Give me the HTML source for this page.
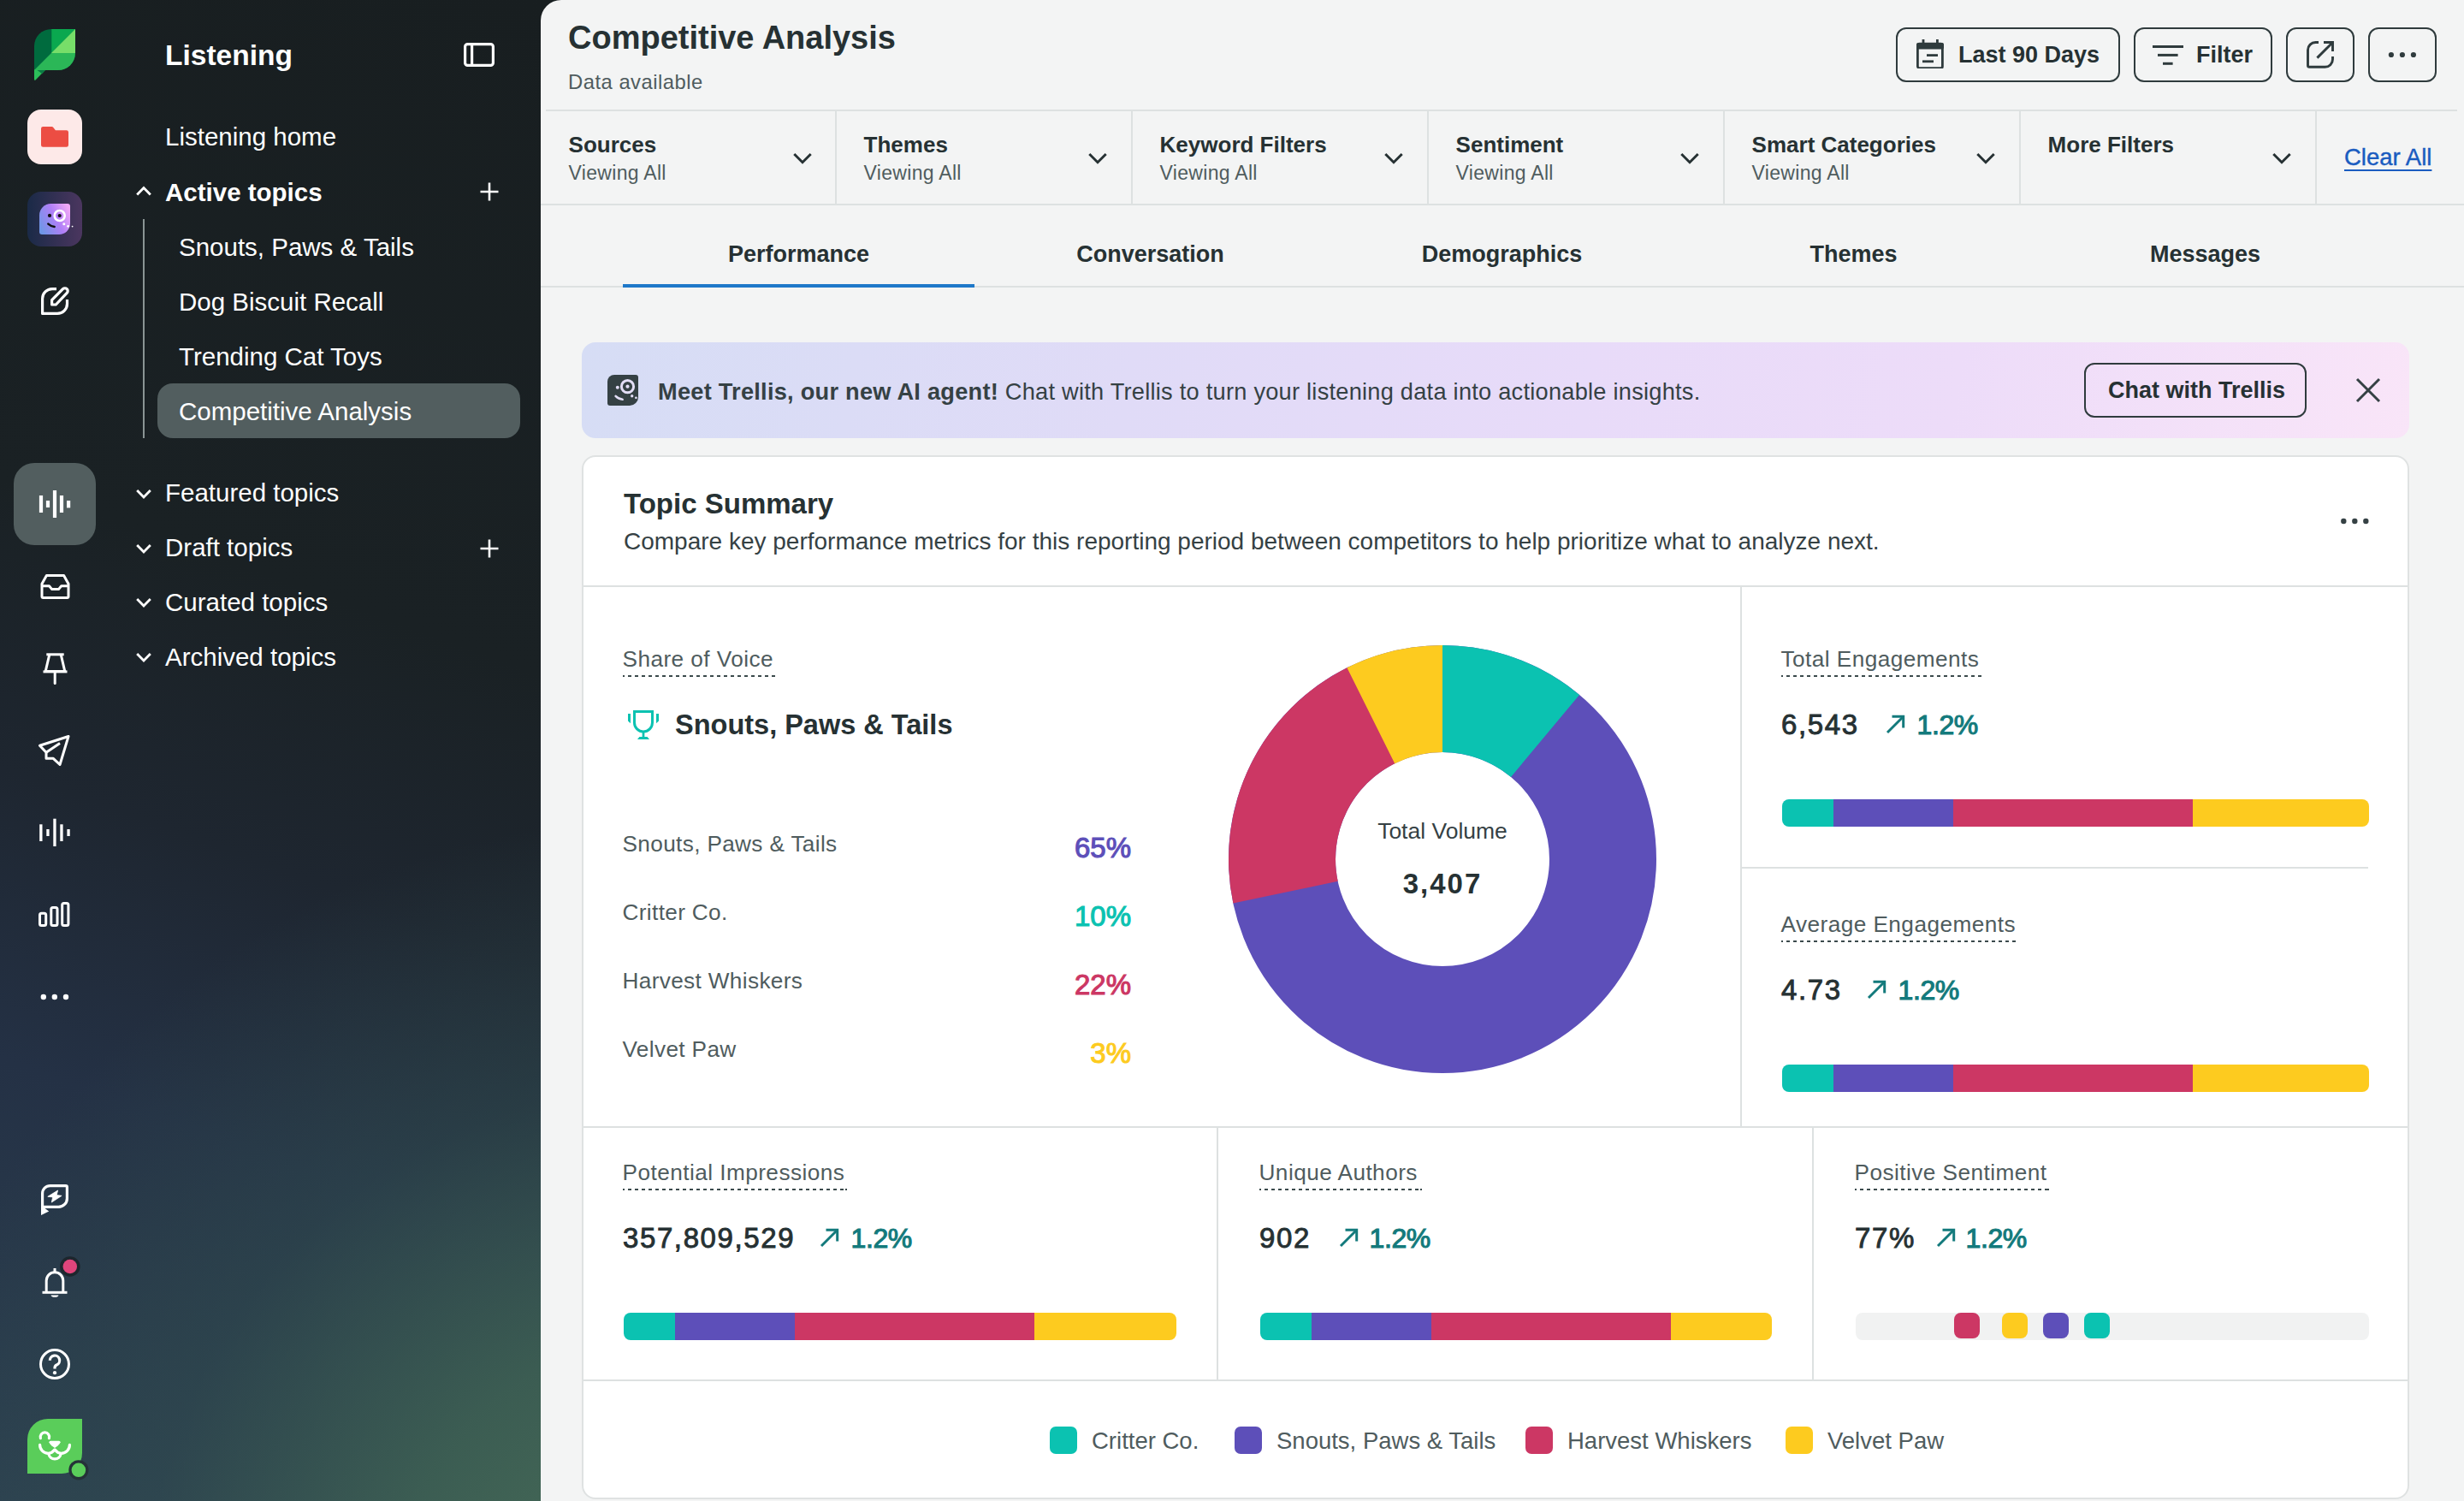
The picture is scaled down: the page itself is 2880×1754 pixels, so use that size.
<!DOCTYPE html>
<html><head><meta charset="utf-8"><title>Competitive Analysis</title><style>
html,body{margin:0;padding:0;width:2880px;height:1754px;overflow:hidden;background:#f3f4f4;}
body{position:relative;font-family:"Liberation Sans",sans-serif;}
.a{position:absolute;display:block;}
.t{position:absolute;white-space:nowrap;}
b{font-weight:700;}
</style></head><body>
<div class="a" style="left:0;top:0;width:660px;height:1754px;background:radial-gradient(circle 1050px at 780px 1880px, rgba(72,110,88,1) 0%, rgba(63,99,84,0.85) 30%, rgba(50,80,80,0.45) 58%, rgba(40,62,72,0) 88%),linear-gradient(200deg,#181e20 0%,#1a2124 40%,#1e2630 57%,#243145 74%,#2c4050 100%);"></div>
<svg class="a" style="left:40px;top:34px;" width="48" height="61" viewBox="0 0 48 61" ><defs><clipPath id="lc"><path d="M20,0 H48 V28 A20,20 0 0 1 28,48 H0 V20 A20,20 0 0 1 20,0 Z"/></clipPath></defs><g clip-path="url(#lc)"><rect x="0" y="0" width="48" height="48" fill="#006b3e"/><polygon points="20.3,0 48,0 20.3,27.7" fill="#0aa84f"/><polygon points="0,48 48,0 48,60 0,60" fill="#2bb757"/><polygon points="48,0 48,28 20,28" fill="#77de69"/></g><path d="M0,47.5 L0,58.3 Q0,61 2,59 L12.8,48 Z" fill="#2cbf5a"/><polygon points="3.5,48 12.7,48 9.3,52.3" fill="#0b7a44"/></svg>
<div class="a" style="left:32px;top:128px;width:64px;height:64px;background:#fde9e8;border-radius:16px;"></div>
<svg class="a" style="left:48px;top:146px;" width="32" height="28" viewBox="0 0 32 28" ><path d="M0,4.3 Q0,2 2.3,2 H12.6 Q13.5,2 14.1,2.7 L16.9,6.3 H29.7 Q32,6.3 32,8.6 V23.4 Q32,25.7 29.7,25.7 H2.3 Q0,25.7 0,23.4 Z" fill="#ec4d43"/></svg>
<svg class="a" style="left:32px;top:224px;" width="64" height="64" viewBox="0 0 64 64" ><defs><linearGradient id="tg1" x1="0" y1="0" x2="1" y2="0"><stop offset="0" stop-color="#1a2a47"/><stop offset="1" stop-color="#4b365f"/></linearGradient><linearGradient id="tg2" x1="0" y1="0.75" x2="1" y2="0.25"><stop offset="0" stop-color="#6f96e6"/><stop offset="0.55" stop-color="#b07ff7"/><stop offset="1" stop-color="#f0a8f7"/></linearGradient></defs><rect x="0" y="0" width="64" height="64" rx="16" fill="url(#tg1)"/><path d="M27.5,14 H47 Q50,14 50,17 V37 A13,13 0 0 1 37,50 H17 Q14,50 14,47 V27.5 A13.5,13.5 0 0 1 27.5,14 Z" fill="url(#tg2)"/><circle cx="26" cy="27.9" r="2.1" fill="#111"/><circle cx="37.7" cy="28" r="6" fill="none" stroke="#fff" stroke-width="2.6"/><circle cx="37.7" cy="28" r="2.1" fill="#111"/><path d="M24.3,37.6 Q27.5,40.6 31.7,41" fill="none" stroke="#111" stroke-width="2.5" stroke-linecap="round"/><circle cx="42.8" cy="37.7" r="1.5" fill="#fff"/><circle cx="47.6" cy="40.3" r="1.4" fill="#fff"/><circle cx="52.6" cy="40.6" r="0.9" fill="#fff"/></svg>
<svg class="a" style="left:48px;top:334px;" width="34" height="36" viewBox="0 0 34 36" ><g fill="none" stroke="#fff" stroke-width="3.2" stroke-linejoin="round" stroke-linecap="butt"><path d="M18,3.6 H13 A11.4,11.4 0 0 0 1.6,15 V32.4 H19 A11.4,11.4 0 0 0 30.5,21 V16"/><path d="M12.6,22 V16.6 L25.5,3.7 A3.3,3.3 0 0 1 30.2,8.4 L17.3,22 Z"/></g></svg>
<div class="a" style="left:16px;top:541px;width:96px;height:96px;background:#525e5f;border-radius:24px;"></div>
<svg class="a" style="left:0px;top:0px;" width="120" height="1200" viewBox="0 0 120 1200" ><rect x="45.9" y="579" width="4.2" height="20" fill="#fff"/><rect x="53.9" y="585" width="4.2" height="8" fill="#fff"/><rect x="61.9" y="573" width="4.2" height="32" fill="#fff"/><rect x="69.9" y="579" width="4.2" height="20" fill="#fff"/><rect x="78" y="585" width="4.2" height="8.399999999999977" fill="#fff"/></svg>
<svg class="a" style="left:46.5px;top:671px;" width="35" height="29" viewBox="0 0 35 29" ><g fill="none" stroke="#fff" stroke-width="3" stroke-linejoin="round"><path d="M7.4,1.5 H27.6 L33,11.2 V26 Q33,27.5 31.5,27.5 H3.5 Q2,27.5 2,26 V11.2 Z"/><path d="M2,13.8 H10.5 L13.7,17.6 H21.5 L24.7,13.8 H33"/></g></svg>
<svg class="a" style="left:49.5px;top:763px;" width="29" height="38" viewBox="0 0 29 38" ><g fill="none" stroke="#fff" stroke-width="3" stroke-linejoin="miter"><path d="M4.3,1.8 H24.7"/><path d="M7.8,1.8 L3.2,21.5 H25.8 L21.2,1.8"/><path d="M0.5,21.9 H28.5"/><path d="M14.2,22 V35.5" stroke-linecap="round"/></g></svg>
<svg class="a" style="left:44.8px;top:859px;" width="37" height="37" viewBox="0 0 37 37" ><g fill="none" stroke="#fff" stroke-width="3" stroke-linejoin="round"><path d="M1.5,12.3 L35,1.5 L25,34.5 L17.3,27.3 L9,27.3 L9,20.2 Z"/><path d="M9,20.2 L25,9.5"/></g></svg>
<svg class="a" style="left:0px;top:0px;" width="120" height="1200" viewBox="0 0 120 1200" ><rect x="46.2" y="963.3" width="3.3" height="19.700000000000045" fill="#fff"/><rect x="54.3" y="969" width="3.3" height="8" fill="#fff"/><rect x="62.3" y="956.7" width="3.3" height="32.299999999999955" fill="#fff"/><rect x="70.3" y="963.3" width="3.3" height="19.700000000000045" fill="#fff"/><rect x="78.4" y="969" width="3.3" height="8" fill="#fff"/></svg>
<svg class="a" style="left:44.5px;top:1054px;" width="37" height="30" viewBox="0 0 37 30" ><g fill="none" stroke="#fff" stroke-width="3"><rect x="1.5" y="13.2" width="7.2" height="14.3" rx="2"/><rect x="14.8" y="6.5" width="7.2" height="21" rx="2"/><rect x="27.7" y="1.5" width="7.2" height="26" rx="2"/></g></svg>
<svg class="a" style="left:44px;top:1158px;" width="40" height="14" viewBox="0 0 40 14" ><circle cx="6.8" cy="7" r="3.2" fill="#fff"/><circle cx="19.8" cy="7" r="3.2" fill="#fff"/><circle cx="33" cy="7" r="3.2" fill="#fff"/></svg>
<svg class="a" style="left:48px;top:1384px;" width="33" height="37" viewBox="0 0 33 37" ><g fill="none" stroke="#fff" stroke-width="3.2" stroke-linejoin="round"><path d="M1.6,27 V10.6 A9,9 0 0 1 10.6,1.6 H28.8 Q30.4,1.6 30.4,3.2 V16.4 A10,10 0 0 1 20.4,26.4 H1.6"/></g><polygon points="0,25 0,36 9.2,31.5 4.5,28 3.2,28 3.2,25" fill="#fff"/><path d="M19.6,7 L7.8,14.3 L13.7,14.9 L12.3,21 L24.1,13.3 L18.2,12.6 Z" fill="#fff" stroke="#fff" stroke-width="0.8" stroke-linejoin="round"/></svg>
<svg class="a" style="left:48px;top:1479px;" width="32" height="38" viewBox="0 0 32 38" ><g fill="none" stroke="#fff" stroke-width="3" stroke-linejoin="round"><path d="M6.2,31.5 V17.5 A9.8,9.8 0 0 1 25.8,17.5 V31.5"/><path d="M1.5,31.3 H30.5"/></g><rect x="14.5" y="3" width="3" height="4.5" fill="#fff"/><path d="M11.5,34.5 H20.5 Q20,36.8 16,36.8 Q12,36.8 11.5,34.5 Z" fill="#fff"/></svg>
<svg class="a" style="left:62px;top:1460px;" width="40" height="40" viewBox="0 0 40 40" ><circle cx="19.8" cy="20" r="11.8" fill="#1d262d"/><circle cx="19.8" cy="20" r="8.3" fill="#e0457b"/></svg>
<svg class="a" style="left:46px;top:1576px;" width="36" height="36" viewBox="0 0 36 36" ><circle cx="18" cy="18" r="16.5" fill="none" stroke="#fff" stroke-width="3"/><path d="M12.3,13.8 A5.7,5.7 0 1 1 20.2,19 Q18,20 18,22.5 V23.5" fill="none" stroke="#fff" stroke-width="3.2" stroke-linecap="butt"/><circle cx="18" cy="28.2" r="2.1" fill="#fff"/></svg>
<svg class="a" style="left:32px;top:1658px;" width="64" height="64" viewBox="0 0 64 64" ><path d="M24,0 H64 V40 A24,24 0 0 1 40,64 H0 V24 A24,24 0 0 1 24,0 Z" fill="#5acd5a"/><g fill="none" stroke="#fff" stroke-width="3.2" stroke-linecap="round"><path d="M15.4,22.6 A5.2,5.2 0 1 1 25.4,22.6"/><path d="M14.6,30.3 A9.8,9.8 0 0 0 24.4,40.3 Q28.8,40 31.6,36.2"/><path d="M49.4,30.3 A9.8,9.8 0 0 1 39.6,40.3 Q35.2,40 32.4,36.2"/><path d="M24.8,40.8 A7.3,7.3 0 0 0 39.2,40.8"/></g><path d="M25.4,27.3 Q25.4,25.8 27,25.8 H37 Q38.6,25.8 38.6,27.3 Q38.2,29.5 35.5,31.5 L32,34 L28.5,31.5 Q25.8,29.5 25.4,27.3 Z" fill="#fff"/></svg>
<svg class="a" style="left:72px;top:1698px;" width="40" height="40" viewBox="0 0 40 40" ><circle cx="19.9" cy="19.8" r="11.6" fill="#253238"/><circle cx="19.9" cy="19.8" r="8.3" fill="#5acd5a"/></svg>
<div class="t " style="left:193.0px;top:47.84px;font-size:33.5px;line-height:33.5px;font-weight:700;color:#ffffff;">Listening</div>
<svg class="a" style="left:542px;top:50px;" width="36" height="28" viewBox="0 0 36 28" ><rect x="1.6" y="1.6" width="32.8" height="24.8" rx="3" fill="none" stroke="#fff" stroke-width="3.2"/><rect x="8" y="1.6" width="3.2" height="24.8" fill="#fff"/></svg>
<div class="t " style="left:193.0px;top:145.13px;font-size:29.5px;line-height:29.5px;font-weight:400;color:#ffffff;">Listening home</div>
<svg class="a" style="left:159px;top:217px;" width="18" height="13" viewBox="0 0 18 13" ><path d="M1.2,10.6 L9,2.6 L16.8,10.6" fill="none" stroke="#fff" stroke-width="2.8"/></svg>
<div class="t " style="left:193.0px;top:209.63px;font-size:29.5px;line-height:29.5px;font-weight:700;color:#ffffff;">Active topics</div>
<svg class="a" style="left:561px;top:213px;" width="22" height="22" viewBox="0 0 22 22" ><path d="M11,0.5 V21.5 M0.5,11 H21.5" stroke="#fff" stroke-width="2.6"/></svg>
<div class="a" style="left:167px;top:256px;width:2px;height:256px;background:#8a9494;"></div>
<div class="a" style="left:184px;top:448px;width:424px;height:64px;background:#525e5f;border-radius:18px;"></div>
<div class="t " style="left:209.0px;top:273.63px;font-size:29.5px;line-height:29.5px;font-weight:400;color:#ffffff;">Snouts, Paws &amp; Tails</div>
<div class="t " style="left:209.0px;top:337.63px;font-size:29.5px;line-height:29.5px;font-weight:400;color:#ffffff;">Dog Biscuit Recall</div>
<div class="t " style="left:209.0px;top:401.63px;font-size:29.5px;line-height:29.5px;font-weight:400;color:#ffffff;">Trending Cat Toys</div>
<div class="t " style="left:209.0px;top:465.63px;font-size:29.5px;line-height:29.5px;font-weight:400;color:#ffffff;">Competitive Analysis</div>
<svg class="a" style="left:159px;top:570.6999999999999px;" width="18" height="13" viewBox="0 0 18 13" ><path d="M1.2,2 L9,10 L16.8,2" fill="none" stroke="#fff" stroke-width="2.8"/></svg>
<div class="t " style="left:193.0px;top:561.33px;font-size:29.5px;line-height:29.5px;font-weight:400;color:#ffffff;">Featured topics</div>
<svg class="a" style="left:159px;top:634.4999999999999px;" width="18" height="13" viewBox="0 0 18 13" ><path d="M1.2,2 L9,10 L16.8,2" fill="none" stroke="#fff" stroke-width="2.8"/></svg>
<div class="t " style="left:193.0px;top:625.13px;font-size:29.5px;line-height:29.5px;font-weight:400;color:#ffffff;">Draft topics</div>
<svg class="a" style="left:159px;top:698.3px;" width="18" height="13" viewBox="0 0 18 13" ><path d="M1.2,2 L9,10 L16.8,2" fill="none" stroke="#fff" stroke-width="2.8"/></svg>
<div class="t " style="left:193.0px;top:688.93px;font-size:29.5px;line-height:29.5px;font-weight:400;color:#ffffff;">Curated topics</div>
<svg class="a" style="left:159px;top:762.0999999999999px;" width="18" height="13" viewBox="0 0 18 13" ><path d="M1.2,2 L9,10 L16.8,2" fill="none" stroke="#fff" stroke-width="2.8"/></svg>
<div class="t " style="left:193.0px;top:752.73px;font-size:29.5px;line-height:29.5px;font-weight:400;color:#ffffff;">Archived topics</div>
<svg class="a" style="left:561px;top:629.5px;" width="22" height="22" viewBox="0 0 22 22" ><path d="M11,0.5 V21.5 M0.5,11 H21.5" stroke="#fff" stroke-width="2.6"/></svg>
<div class="a" style="left:632px;top:0px;width:2248px;height:1754px;background:#f3f4f4;border-top-left-radius:24px;"></div>
<div class="t " style="left:664.0px;top:24.93px;font-size:38px;line-height:38px;font-weight:700;color:#263133;">Competitive Analysis</div>
<div class="t " style="left:664.0px;top:84.45px;font-size:23.8px;line-height:23.8px;font-weight:400;color:#4f5c5e;letter-spacing:0.5px;">Data available</div>
<div class="a" style="left:2216px;top:32px;width:262px;height:64px;background:transparent;border:2px solid #2f3b3d;border-radius:12px;box-sizing:border-box;"></div>
<svg class="a" style="left:2240px;top:46px;" width="32" height="34" viewBox="0 0 32 34" ><g fill="none" stroke="#2f3b3d" stroke-width="2.8"><rect x="1.4" y="5.2" width="29" height="28.4" rx="2"/></g><rect x="0" y="4" width="32" height="7.6" rx="2" fill="#2f3b3d"/><rect x="6.6" y="0" width="2.8" height="5" fill="#2f3b3d"/><rect x="23" y="0" width="2.8" height="5" fill="#2f3b3d"/><rect x="12" y="17.2" width="13" height="2.8" fill="#2f3b3d"/><rect x="7" y="24.4" width="13" height="2.8" fill="#2f3b3d"/></svg>
<div class="t " style="left:2289.0px;top:51.14px;font-size:27px;line-height:27px;font-weight:700;color:#263133;">Last 90 Days</div>
<div class="a" style="left:2494px;top:32px;width:162px;height:64px;background:transparent;border:2px solid #2f3b3d;border-radius:12px;box-sizing:border-box;"></div>
<svg class="a" style="left:2516px;top:52.5px;" width="36" height="23" viewBox="0 0 36 23" ><rect x="0" y="0" width="36" height="3" fill="#2f3b3d"/><rect x="6" y="9.9" width="23.6" height="3" fill="#2f3b3d"/><rect x="12" y="19.8" width="11.6" height="3" fill="#2f3b3d"/></svg>
<div class="t " style="left:2567.0px;top:51.14px;font-size:27px;line-height:27px;font-weight:700;color:#263133;">Filter</div>
<div class="a" style="left:2672px;top:32px;width:80px;height:64px;background:transparent;border:2px solid #2f3b3d;border-radius:12px;box-sizing:border-box;"></div>
<svg class="a" style="left:2696px;top:48px;" width="32" height="32" viewBox="0 0 32 32" ><g fill="none" stroke="#2f3b3d" stroke-width="2.9"><path d="M14,1.5 H10.5 A9,9 0 0 0 1.5,10.5 V28.5 Q1.5,30.3 3.3,30.3 H21.5 A9,9 0 0 0 30.5,21.3 V18"/><path d="M20,1.5 H30.5 V12"/><path d="M30.3,1.7 L12.4,19.6"/></g></svg>
<div class="a" style="left:2768px;top:32px;width:80px;height:64px;background:transparent;border:2px solid #2f3b3d;border-radius:12px;box-sizing:border-box;"></div>
<svg class="a" style="left:2788px;top:58px;" width="40" height="12" viewBox="0 0 40 12" ><circle cx="6.9" cy="6" r="3.1" fill="#2f3b3d"/><circle cx="19.9" cy="6" r="3.1" fill="#2f3b3d"/><circle cx="32.9" cy="6" r="3.1" fill="#2f3b3d"/></svg>
<div class="a" style="left:638px;top:128px;width:2234px;height:2px;background:#dde1e1;"></div>
<div class="a" style="left:632px;top:238px;width:2248px;height:2px;background:#dde1e1;"></div>
<div class="t " style="left:664.6px;top:155.89px;font-size:26px;line-height:26px;font-weight:700;color:#263133;">Sources</div>
<div class="t " style="left:664.6px;top:191.23px;font-size:23px;line-height:23px;font-weight:400;color:#4f5c5e;letter-spacing:0.3px;">Viewing All</div>
<svg class="a" style="left:927px;top:177.5px;" width="22" height="14" viewBox="0 0 22 14" ><path d="M1.3,2 L11,11.7 L20.7,2" fill="none" stroke="#263133" stroke-width="3"/></svg>
<div class="a" style="left:976px;top:130px;width:2px;height:108px;background:#dde1e1;"></div>
<div class="t " style="left:1009.6px;top:155.89px;font-size:26px;line-height:26px;font-weight:700;color:#263133;">Themes</div>
<div class="t " style="left:1009.6px;top:191.23px;font-size:23px;line-height:23px;font-weight:400;color:#4f5c5e;letter-spacing:0.3px;">Viewing All</div>
<svg class="a" style="left:1272px;top:177.5px;" width="22" height="14" viewBox="0 0 22 14" ><path d="M1.3,2 L11,11.7 L20.7,2" fill="none" stroke="#263133" stroke-width="3"/></svg>
<div class="a" style="left:1322px;top:130px;width:2px;height:108px;background:#dde1e1;"></div>
<div class="t " style="left:1355.6px;top:155.89px;font-size:26px;line-height:26px;font-weight:700;color:#263133;">Keyword Filters</div>
<div class="t " style="left:1355.6px;top:191.23px;font-size:23px;line-height:23px;font-weight:400;color:#4f5c5e;letter-spacing:0.3px;">Viewing All</div>
<svg class="a" style="left:1618px;top:177.5px;" width="22" height="14" viewBox="0 0 22 14" ><path d="M1.3,2 L11,11.7 L20.7,2" fill="none" stroke="#263133" stroke-width="3"/></svg>
<div class="a" style="left:1668px;top:130px;width:2px;height:108px;background:#dde1e1;"></div>
<div class="t " style="left:1701.6px;top:155.89px;font-size:26px;line-height:26px;font-weight:700;color:#263133;">Sentiment</div>
<div class="t " style="left:1701.6px;top:191.23px;font-size:23px;line-height:23px;font-weight:400;color:#4f5c5e;letter-spacing:0.3px;">Viewing All</div>
<svg class="a" style="left:1964px;top:177.5px;" width="22" height="14" viewBox="0 0 22 14" ><path d="M1.3,2 L11,11.7 L20.7,2" fill="none" stroke="#263133" stroke-width="3"/></svg>
<div class="a" style="left:2014px;top:130px;width:2px;height:108px;background:#dde1e1;"></div>
<div class="t " style="left:2047.6px;top:155.89px;font-size:26px;line-height:26px;font-weight:700;color:#263133;">Smart Categories</div>
<div class="t " style="left:2047.6px;top:191.23px;font-size:23px;line-height:23px;font-weight:400;color:#4f5c5e;letter-spacing:0.3px;">Viewing All</div>
<svg class="a" style="left:2310px;top:177.5px;" width="22" height="14" viewBox="0 0 22 14" ><path d="M1.3,2 L11,11.7 L20.7,2" fill="none" stroke="#263133" stroke-width="3"/></svg>
<div class="a" style="left:2360px;top:130px;width:2px;height:108px;background:#dde1e1;"></div>
<div class="t " style="left:2393.6px;top:155.89px;font-size:26px;line-height:26px;font-weight:700;color:#263133;">More Filters</div>
<svg class="a" style="left:2656px;top:177.5px;" width="22" height="14" viewBox="0 0 22 14" ><path d="M1.3,2 L11,11.7 L20.7,2" fill="none" stroke="#263133" stroke-width="3"/></svg>
<div class="a" style="left:2706px;top:130px;width:2px;height:108px;background:#dde1e1;"></div>
<div class="t " style="left:2740.0px;top:169.62px;font-size:27.5px;line-height:27.5px;font-weight:400;color:#1a5cc0;text-decoration:underline;text-decoration-thickness:2px;text-underline-offset:5px;-webkit-text-stroke:0.4px #1a5cc0;">Clear All</div>
<div class="a" style="left:632px;top:334px;width:2248px;height:2px;background:#dde1e1;"></div>
<div class="t" style="left:728.0px;width:411px;text-align:center;top:283.54px;font-size:27px;line-height:27px;font-weight:700;color:#263133;">Performance</div>
<div class="t" style="left:1139.0px;width:411px;text-align:center;top:283.54px;font-size:27px;line-height:27px;font-weight:700;color:#263133;">Conversation</div>
<div class="t" style="left:1550.0px;width:411px;text-align:center;top:283.54px;font-size:27px;line-height:27px;font-weight:700;color:#263133;">Demographics</div>
<div class="t" style="left:1961.0px;width:411px;text-align:center;top:283.54px;font-size:27px;line-height:27px;font-weight:700;color:#263133;">Themes</div>
<div class="t" style="left:2372.0px;width:411px;text-align:center;top:283.54px;font-size:27px;line-height:27px;font-weight:700;color:#263133;">Messages</div>
<div class="a" style="left:728px;top:332px;width:411px;height:4px;background:#1e78c9;"></div>
<div class="a" style="left:680px;top:400px;width:2136px;height:112px;border-radius:16px;background:linear-gradient(100deg,#d6ddf5 0%,#e0dbf7 30%,#e8dbf9 55%,#eddcf9 75%,#f9e5f8 100%);"></div>
<svg class="a" style="left:710px;top:438px;" width="36" height="36" viewBox="0 0 36 36" ><path d="M8,0 H33 Q36,0 36,3 V26 A10,10 0 0 1 26,36 H3 Q0,36 0,33 V8 A8,8 0 0 1 8,0 Z" fill="#354144"/><circle cx="11.8" cy="14.7" r="2" fill="#e3def6"/><circle cx="23.5" cy="13.7" r="7.1" fill="none" stroke="#e3def6" stroke-width="3"/><circle cx="23.5" cy="13.7" r="2.1" fill="#e3def6"/><path d="M9.6,24.9 Q13,28.3 17.6,28.8" fill="none" stroke="#e3def6" stroke-width="2.6" stroke-linecap="round"/><circle cx="28.7" cy="24.8" r="1.7" fill="#e3def6"/><circle cx="33.4" cy="26.8" r="1.4" fill="#e3def6"/></svg>
<div class="t " style="left:769.0px;top:443.58px;font-size:27.2px;line-height:27.2px;font-weight:400;color:#354144;letter-spacing:0.25px;"><b>Meet Trellis, our new AI agent!</b> Chat with Trellis to turn your listening data into actionable insights.</div>
<div class="a" style="left:2436px;top:424px;width:260px;height:64px;background:transparent;border:2px solid #2f3b3d;border-radius:12px;box-sizing:border-box;"></div>
<div class="t " style="left:2464.0px;top:443.44px;font-size:27px;line-height:27px;font-weight:700;color:#263133;">Chat with Trellis</div>
<svg class="a" style="left:2753px;top:441px;" width="30" height="30" viewBox="0 0 30 30" ><path d="M2,2 L28,28 M28,2 L2,28" stroke="#354144" stroke-width="3"/></svg>
<div class="a" style="left:680px;top:532px;width:2136px;height:1220px;background:#ffffff;border:2px solid #dfe2e2;border-radius:16px;box-sizing:border-box;"></div>
<div class="t " style="left:729.0px;top:572.37px;font-size:33px;line-height:33px;font-weight:700;color:#263133;">Topic Summary</div>
<div class="t " style="left:729.0px;top:618.70px;font-size:28px;line-height:28px;font-weight:400;color:#354144;">Compare key performance metrics for this reporting period between competitors to help prioritize what to analyze next.</div>
<svg class="a" style="left:2735px;top:602px;" width="40" height="14" viewBox="0 0 40 14" ><circle cx="4.3" cy="7" r="3.2" fill="#354144"/><circle cx="17.3" cy="7" r="3.2" fill="#354144"/><circle cx="30.3" cy="7" r="3.2" fill="#354144"/></svg>
<div class="a" style="left:682px;top:684px;width:2132px;height:2px;background:#dde1e1;"></div>
<div class="a" style="left:2034px;top:686px;width:2px;height:631px;background:#dde1e1;"></div>
<div class="a" style="left:2036px;top:1013px;width:732px;height:2px;background:#dde1e1;"></div>
<div class="a" style="left:682px;top:1316px;width:2132px;height:2px;background:#dde1e1;"></div>
<div class="a" style="left:1422px;top:1318px;width:2px;height:295px;background:#dde1e1;"></div>
<div class="a" style="left:2118px;top:1318px;width:2px;height:295px;background:#dde1e1;"></div>
<div class="a" style="left:682px;top:1612px;width:2132px;height:2px;background:#dde1e1;"></div>
<div class="t " style="left:727.5px;top:757.02px;font-size:26.2px;line-height:26.2px;font-weight:400;color:#4f5c5e;letter-spacing:0.45px;">Share of Voice</div>
<div class="a" style="left:728px;top:789px;width:178px;height:2px;background:repeating-linear-gradient(90deg,#3b4a4c 0 4px,transparent 4px 8px);background-position:-2px 0;"></div>
<svg class="a" style="left:733px;top:829px;" width="38" height="36" viewBox="0 0 38 36" ><g fill="none" stroke="#0bc2b1" stroke-width="3"><path d="M8.5,2.5 H29.5 V15.5 A10.5,10.5 0 0 1 8.5,15.5 Z"/></g><rect x="17.65" y="26.5" width="2.7" height="6" fill="#0bc2b1"/><polygon points="12,35 14.4,32 23.6,32 26,35" fill="#0bc2b1"/><polygon points="1,5 4,5 4,16.3 1,13.6" fill="#0bc2b1"/><polygon points="34,5 37,5 37,13.6 34,16.3" fill="#0bc2b1"/></svg>
<div class="t " style="left:789.0px;top:831.09px;font-size:32.5px;line-height:32.5px;font-weight:700;color:#263133;">Snouts, Paws &amp; Tails</div>
<div class="t " style="left:727.5px;top:973.22px;font-size:26.2px;line-height:26.2px;font-weight:400;color:#4f5c5e;letter-spacing:0.35px;">Snouts, Paws &amp; Tails</div>
<div class="t" style="left:722.0px;width:600px;text-align:right;top:973.67px;font-size:33px;line-height:33px;font-weight:400;color:#5d4fb9;-webkit-text-stroke:1.1px #5d4fb9;">65%</div>
<div class="t " style="left:727.5px;top:1053.22px;font-size:26.2px;line-height:26.2px;font-weight:400;color:#4f5c5e;letter-spacing:0.35px;">Critter Co.</div>
<div class="t" style="left:722.0px;width:600px;text-align:right;top:1053.67px;font-size:33px;line-height:33px;font-weight:400;color:#0bc2b1;-webkit-text-stroke:1.1px #0bc2b1;">10%</div>
<div class="t " style="left:727.5px;top:1133.22px;font-size:26.2px;line-height:26.2px;font-weight:400;color:#4f5c5e;letter-spacing:0.35px;">Harvest Whiskers</div>
<div class="t" style="left:722.0px;width:600px;text-align:right;top:1133.67px;font-size:33px;line-height:33px;font-weight:400;color:#cc3764;-webkit-text-stroke:1.1px #cc3764;">22%</div>
<div class="t " style="left:727.5px;top:1213.22px;font-size:26.2px;line-height:26.2px;font-weight:400;color:#4f5c5e;letter-spacing:0.35px;">Velvet Paw</div>
<div class="t" style="left:722.0px;width:600px;text-align:right;top:1213.67px;font-size:33px;line-height:33px;font-weight:400;color:#fdcb1f;-webkit-text-stroke:1.1px #fdcb1f;">3%</div>
<svg class="a" style="left:1400px;top:720px;" width="560" height="570" viewBox="0 0 560 570" ><circle cx="286" cy="284" r="187.5" fill="none" stroke="#5d4fb9" stroke-width="125"/><path d="M283.38,34.01 A250,250 0 0 1 446.03,91.93 L366.01,187.96 A125,125 0 0 0 284.69,159.01 Z" fill="#0bc2b1"/><path d="M41.37,335.55 A250,250 0 0 1 177.19,58.92 L231.60,171.46 A125,125 0 0 0 163.69,309.78 Z" fill="#cc3764"/><path d="M174.45,60.27 A250,250 0 0 1 286.00,34.00 L286.00,159.00 A125,125 0 0 0 230.23,172.13 Z" fill="#fdcb1f"/></svg>
<div class="t" style="left:1536.0px;width:300px;text-align:center;top:957.57px;font-size:26.5px;line-height:26.5px;font-weight:400;color:#354144;">Total Volume</div>
<div class="t" style="left:1536.0px;width:300px;text-align:center;top:1016.07px;font-size:33px;line-height:33px;font-weight:700;color:#263133;letter-spacing:2px;">3,407</div>
<div class="t " style="left:2081.5px;top:756.82px;font-size:26.2px;line-height:26.2px;font-weight:400;color:#4f5c5e;letter-spacing:0.45px;">Total Engagements</div>
<div class="a" style="left:2082px;top:789px;width:234px;height:2px;background:repeating-linear-gradient(90deg,#3b4a4c 0 4px,transparent 4px 8px);background-position:-2px 0;"></div>
<div class="t " style="left:2082.0px;top:830.07px;font-size:33px;line-height:33px;font-weight:400;color:#263133;letter-spacing:1.6px;-webkit-text-stroke:0.9px #263133;">6,543</div>
<svg class="a" style="left:2204px;top:835px;" width="23" height="23" viewBox="0 0 23 23" ><g fill="none" stroke="#137a7c" stroke-width="3"><path d="M2,21 L20.5,2.5"/><path d="M7.5,2.3 H20.7 V15.5"/></g></svg>
<div class="t " style="left:2240.5px;top:830.91px;font-size:32px;line-height:32px;font-weight:400;color:#137a7c;letter-spacing:-0.4px;-webkit-text-stroke:1.1px #137a7c;">1.2%</div>
<div class="a" style="left:2083px;top:934px;width:686px;height:32px;border-radius:8px;overflow:hidden;display:flex"><div style="width:60.00px;height:32px;background:#0bc2b1"></div><div style="width:140.00px;height:32px;background:#5d4fb9"></div><div style="width:280.00px;height:32px;background:#cc3764"></div><div style="width:206.00px;height:32px;background:#fdcb1f"></div></div>
<div class="t " style="left:2081.5px;top:1066.82px;font-size:26.2px;line-height:26.2px;font-weight:400;color:#4f5c5e;letter-spacing:0.45px;">Average Engagements</div>
<div class="a" style="left:2082px;top:1099px;width:274px;height:2px;background:repeating-linear-gradient(90deg,#3b4a4c 0 4px,transparent 4px 8px);background-position:-2px 0;"></div>
<div class="t " style="left:2082.0px;top:1140.07px;font-size:33px;line-height:33px;font-weight:400;color:#263133;letter-spacing:1.6px;-webkit-text-stroke:0.9px #263133;">4.73</div>
<svg class="a" style="left:2182px;top:1145px;" width="23" height="23" viewBox="0 0 23 23" ><g fill="none" stroke="#137a7c" stroke-width="3"><path d="M2,21 L20.5,2.5"/><path d="M7.5,2.3 H20.7 V15.5"/></g></svg>
<div class="t " style="left:2218.5px;top:1140.91px;font-size:32px;line-height:32px;font-weight:400;color:#137a7c;letter-spacing:-0.4px;-webkit-text-stroke:1.1px #137a7c;">1.2%</div>
<div class="a" style="left:2083px;top:1244px;width:686px;height:32px;border-radius:8px;overflow:hidden;display:flex"><div style="width:60.00px;height:32px;background:#0bc2b1"></div><div style="width:140.00px;height:32px;background:#5d4fb9"></div><div style="width:280.00px;height:32px;background:#cc3764"></div><div style="width:206.00px;height:32px;background:#fdcb1f"></div></div>
<div class="t " style="left:727.5px;top:1356.82px;font-size:26.2px;line-height:26.2px;font-weight:400;color:#4f5c5e;letter-spacing:0.45px;">Potential Impressions</div>
<div class="a" style="left:728px;top:1389px;width:262px;height:2px;background:repeating-linear-gradient(90deg,#3b4a4c 0 4px,transparent 4px 8px);background-position:-2px 0;"></div>
<div class="t " style="left:728.0px;top:1430.07px;font-size:33px;line-height:33px;font-weight:400;color:#263133;letter-spacing:1.6px;-webkit-text-stroke:0.9px #263133;">357,809,529</div>
<svg class="a" style="left:958px;top:1435px;" width="23" height="23" viewBox="0 0 23 23" ><g fill="none" stroke="#137a7c" stroke-width="3"><path d="M2,21 L20.5,2.5"/><path d="M7.5,2.3 H20.7 V15.5"/></g></svg>
<div class="t " style="left:994.5px;top:1430.91px;font-size:32px;line-height:32px;font-weight:400;color:#137a7c;letter-spacing:-0.4px;-webkit-text-stroke:1.1px #137a7c;">1.2%</div>
<div class="a" style="left:729px;top:1534px;width:646px;height:32px;border-radius:8px;overflow:hidden;display:flex"><div style="width:60.00px;height:32px;background:#0bc2b1"></div><div style="width:140.00px;height:32px;background:#5d4fb9"></div><div style="width:280.00px;height:32px;background:#cc3764"></div><div style="width:166.00px;height:32px;background:#fdcb1f"></div></div>
<div class="t " style="left:1471.5px;top:1356.82px;font-size:26.2px;line-height:26.2px;font-weight:400;color:#4f5c5e;letter-spacing:0.45px;">Unique Authors</div>
<div class="a" style="left:1472px;top:1389px;width:190px;height:2px;background:repeating-linear-gradient(90deg,#3b4a4c 0 4px,transparent 4px 8px);background-position:-2px 0;"></div>
<div class="t " style="left:1472.0px;top:1430.07px;font-size:33px;line-height:33px;font-weight:400;color:#263133;letter-spacing:1.6px;-webkit-text-stroke:0.9px #263133;">902</div>
<svg class="a" style="left:1565px;top:1435px;" width="23" height="23" viewBox="0 0 23 23" ><g fill="none" stroke="#137a7c" stroke-width="3"><path d="M2,21 L20.5,2.5"/><path d="M7.5,2.3 H20.7 V15.5"/></g></svg>
<div class="t " style="left:1600.5px;top:1430.91px;font-size:32px;line-height:32px;font-weight:400;color:#137a7c;letter-spacing:-0.4px;-webkit-text-stroke:1.1px #137a7c;">1.2%</div>
<div class="a" style="left:1473px;top:1534px;width:598px;height:32px;border-radius:8px;overflow:hidden;display:flex"><div style="width:60.00px;height:32px;background:#0bc2b1"></div><div style="width:140.00px;height:32px;background:#5d4fb9"></div><div style="width:280.00px;height:32px;background:#cc3764"></div><div style="width:118.00px;height:32px;background:#fdcb1f"></div></div>
<div class="t " style="left:2167.5px;top:1356.82px;font-size:26.2px;line-height:26.2px;font-weight:400;color:#4f5c5e;letter-spacing:0.45px;">Positive Sentiment</div>
<div class="a" style="left:2168px;top:1389px;width:227px;height:2px;background:repeating-linear-gradient(90deg,#3b4a4c 0 4px,transparent 4px 8px);background-position:-2px 0;"></div>
<div class="t " style="left:2168.0px;top:1430.07px;font-size:33px;line-height:33px;font-weight:400;color:#263133;letter-spacing:1.6px;-webkit-text-stroke:0.9px #263133;">77%</div>
<svg class="a" style="left:2263px;top:1435px;" width="23" height="23" viewBox="0 0 23 23" ><g fill="none" stroke="#137a7c" stroke-width="3"><path d="M2,21 L20.5,2.5"/><path d="M7.5,2.3 H20.7 V15.5"/></g></svg>
<div class="t " style="left:2297.5px;top:1430.91px;font-size:32px;line-height:32px;font-weight:400;color:#137a7c;letter-spacing:-0.4px;-webkit-text-stroke:1.1px #137a7c;">1.2%</div>
<div class="a" style="left:2169px;top:1534px;width:600px;height:32px;background:#f1f2f2;border-radius:8px;"></div>
<div class="a" style="left:2284px;top:1534px;width:30px;height:30px;background:#cc3764;border-radius:8px;"></div>
<div class="a" style="left:2340px;top:1534px;width:30px;height:30px;background:#fdcb1f;border-radius:8px;"></div>
<div class="a" style="left:2388px;top:1534px;width:30px;height:30px;background:#5d4fb9;border-radius:8px;"></div>
<div class="a" style="left:2436px;top:1534px;width:30px;height:30px;background:#0bc2b1;border-radius:8px;"></div>
<div class="a" style="left:1227px;top:1667px;width:32px;height:32px;background:#0bc2b1;border-radius:7px;"></div>
<div class="t " style="left:1276.0px;top:1669.72px;font-size:27.5px;line-height:27.5px;font-weight:400;color:#4f5c5e;">Critter Co.</div>
<div class="a" style="left:1443px;top:1667px;width:32px;height:32px;background:#5d4fb9;border-radius:7px;"></div>
<div class="t " style="left:1492.0px;top:1669.72px;font-size:27.5px;line-height:27.5px;font-weight:400;color:#4f5c5e;">Snouts, Paws &amp; Tails</div>
<div class="a" style="left:1783px;top:1667px;width:32px;height:32px;background:#cc3764;border-radius:7px;"></div>
<div class="t " style="left:1832.0px;top:1669.72px;font-size:27.5px;line-height:27.5px;font-weight:400;color:#4f5c5e;">Harvest Whiskers</div>
<div class="a" style="left:2087px;top:1667px;width:32px;height:32px;background:#fdcb1f;border-radius:7px;"></div>
<div class="t " style="left:2136.0px;top:1669.72px;font-size:27.5px;line-height:27.5px;font-weight:400;color:#4f5c5e;">Velvet Paw</div>
</body></html>
